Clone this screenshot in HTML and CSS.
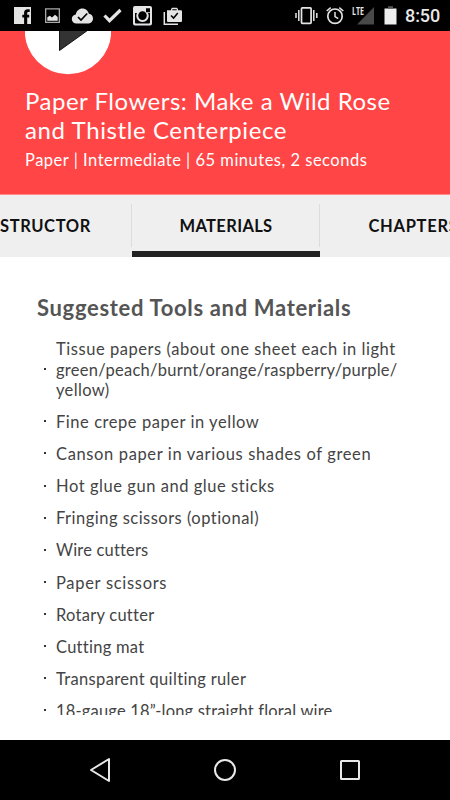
FILE: index.html
```html
<!DOCTYPE html>
<html lang="en">
<head>
<meta charset="utf-8">
<title>Paper Flowers</title>
<link rel="stylesheet" href="styles.css">
</head>
<body>
<div class="screen">
  <div class="status">
    <div class="left-icons">
      <svg width="186" height="31" viewBox="0 0 186 31" fill="#e4e4e4">
        <path d="M14 7h17v17h-3.800v-6.500h2v-2.700h-2v-1.600c0-.9.300-1.300 1.300-1.300h1.200V9.300h-2c-2.400 0-3.600 1.200-3.600 3.500v2h-1.800v2.700h1.800V24H14z"/>
        <path d="M45 8.200h15v14.800H45zM46.300 9.500v12.200h12.400V9.500z" fill-rule="evenodd" fill="#a9a9a9"/>
        <path d="M47.300 20.700v-3.500l2.500-1.500 2.200 1.700 3-2.700 2.700 2.300v3.700z"/>
        <path d="M76.500 23.500c-2.800 0-4.700-2-4.700-4.500s1.700-4.300 4-4.600c.7-3.600 3.300-6 6.500-6 3.300 0 5.800 2.200 6.600 5.400 2.500.3 4.100 2.300 4.100 4.700 0 2.800-2 5-4.900 5z"/>
        <path d="M78 17l3 3 6.200-6.500" fill="none" stroke="#000" stroke-width="1.700"/>
        <path d="M104.500 15.500l5 5.200L120.500 10" fill="none" stroke="#e4e4e4" stroke-width="3.200"/>
        <path fill-rule="evenodd" d="M135 6h15a2 2 0 0 1 2 2v15.500a2 2 0 0 1-2 2h-15a2 2 0 0 1-2-2V8a2 2 0 0 1 2-2zM146 8.200v4h4v-4zM135 13v9.500a1 1 0 0 0 1 1h13a1 1 0 0 0 1-1V13h-2a6.200 6.200 0 1 1-11 0zM142.500 11.300a4.300 4.300 0 1 0 0 8.600 4.300 4.300 0 0 0 0-8.600z"/>
        <path d="M164.300 12v12.200H178" fill="none" stroke="#e4e4e4" stroke-width="1.500"/>
        <path fill-rule="evenodd" d="M167 10.300h4V9l1.200-1.200h4.600L178 9v1.300h3a1 1 0 0 1 1 1V21a1 1 0 0 1-1 1h-13a1 1 0 0 1-1-1zM172.300 10.300h4.400V9.200h-4.400z"/>
        <path d="M171 15.500l2.600 2.600 4.200-5" fill="none" stroke="#000" stroke-width="1.500"/>
      </svg>
    </div>
    <div class="right-icons">
      <svg width="110" height="31" viewBox="290 0 110 31" fill="none" stroke="#e4e4e4">
        <rect x="301.500" y="7.800" width="9.600" height="15.500" rx=".8" stroke-width="1.700"/>
        <path d="M298.800 10v11M296 13v5M313.800 10v11M316.800 13v5" stroke-width="1.500"/>
        <circle cx="335" cy="16.200" r="7.200" stroke-width="1.700"/>
        <path d="M335 12v4.700l3.200 2M326.700 11l4-3.400M343.300 11l-4-3.400" stroke-width="1.500"/>
        <path d="M374 7v17.500h-17z" fill="#484848" stroke="none"/>
        <path d="M384.500 8.500V24.500h12V8.500z" fill="#eee" stroke="none"/>
        <path d="M388 6.200h5v2.300h-5z" fill="#555" stroke="none"/>
      </svg>
      <span class="lte">LTE</span>
      <span class="clock">8:50</span>
    </div>
  </div>
  <header class="hero">
    <svg class="play" width="86" height="44" viewBox="0 0 86 44"><circle cx="43" cy="0" r="43.200" fill="#fff"/><path d="M34.500-36v55.500L62-.2z" fill="#333" stroke="#151515" stroke-width="1"/></svg>
    <h1>Paper Flowers: Make a Wild Rose<br><span class="title-end">and Thistle Centerpiece</span></h1>
    <p>Paper | Intermediate | 65 minutes, 2 seconds</p>
  </header>
  <nav class="tabs">
    <div class="tab first">STRUCTOR</div>
    <div class="tab active">MATERIALS</div>
    <div class="tab last">CHAPTERS</div>
  </nav>
  <main class="content">
    <h2>Suggested Tools and Materials</h2>
    <ul>
      <li><div>Tissue papers (about one sheet each in light<br><span class="snug">green/peach/burnt/orange/raspberry/purple/</span><br><span class="medium">yellow)</span></div></li>
      <li>Fine crepe paper in yellow</li>
      <li class="wide">Canson paper in various shades of green</li>
      <li>Hot glue gun and glue sticks</li>
      <li class="normal">Fringing scissors (optional)</li>
      <li class="tight">Wire cutters</li>
      <li class="widest">Paper scissors</li>
      <li class="snug">Rotary cutter</li>
      <li class="snug">Cutting mat</li>
      <li class="medium">Transparent quilting ruler</li>
      <li class="tight">18-gauge 18”-long straight floral wire</li>
    </ul>
  </main>
  <footer class="navbar">
    <svg width="450" height="60" viewBox="0 0 450 60" fill="none" stroke="#e8e8e8" stroke-width="2"><path d="M109 19v22L91 30z" stroke-linejoin="round"/><circle cx="225" cy="30" r="10"/><rect x="341" y="21" width="18" height="18" rx=".5"/></svg>
  </footer>
</div>
</body>
</html>
```
FILE: styles.css
```css
* { box-sizing: border-box; }
body { margin: 0; background: #fff; font-family: Lato, "Liberation Sans", sans-serif; font-variant-ligatures: none; }
.screen { width: 450px; height: 800px; overflow: hidden; display: flex; flex-direction: column; }
.status { height: 31px; background: #000; display: flex; justify-content: space-between; flex: none; }
.left-icons svg, .right-icons svg, .navbar svg { display: block; }
.right-icons { position: relative; display: flex; width: 160px; color: #e8e8e8; font-family: Roboto, sans-serif; }
.lte { position: absolute; left: 62px; top: 5px; font: 700 11px/12px "Open Sans", Roboto, sans-serif; transform: scaleX(.64); transform-origin: left; }
.clock { font-size: 18px; line-height: 32px; margin-left: 5px; font-weight: 500; letter-spacing: -.1px; }
.hero { height: 164px; flex: none; background: #ff4545; color: #fff; padding-left: 25px; border-bottom: 1px solid #ff8c8c; }
.play { display: block; }
h1 { margin: 11px 0 0; font-weight: 400; font-size: 24px; line-height: 29px; letter-spacing: .5px; white-space: nowrap; }
.title-end { letter-spacing: .6px; }
.hero p { margin: 6px 0 0; font-size: 16.500px; line-height: 20px; letter-spacing: .5px; white-space: nowrap; }
.tabs { height: 62px; flex: none; background: #efefef; display: flex; overflow: hidden; font-size: 16.500px; font-weight: 700; letter-spacing: .5px; color: #111; }
.tab { flex: none; height: 62px; line-height: 63px; white-space: nowrap; }
.first { width: 132px; letter-spacing: .6px; }
.active { width: 188px; padding-left: 47.500px; letter-spacing: .35px; border-bottom: 6px solid #222; }
.first, .active { background: linear-gradient(#dcdcdc, #dcdcdc) right 9px / 1px 43px no-repeat; }
.last { padding-left: 48.500px; letter-spacing: .7px; }
.content { height: 458px; flex: none; overflow: hidden; padding: 38px 0 0 37px; color: #444; }
h2 { margin: 0 0 18px; font-size: 22px; line-height: 26px; letter-spacing: .67px; color: #555; }
ul { margin: 0; padding: 0; list-style: none; font-size: 16.500px; line-height: 20.500px; letter-spacing: .55px; }
li { display: flex; align-items: center; white-space: nowrap; margin-bottom: 11.600px; }
li::before { content: ""; width: 2px; height: 2px; background: #333; margin: -2px 10px 0 7px; }
.tight { letter-spacing: .18px; }
.snug { letter-spacing: .26px; }
.medium { letter-spacing: .34px; }
.normal { letter-spacing: .48px; }
.wide { letter-spacing: .63px; }
.widest { letter-spacing: .7px; }
.navbar { margin-top: auto; height: 60px; background: #000; }
```
